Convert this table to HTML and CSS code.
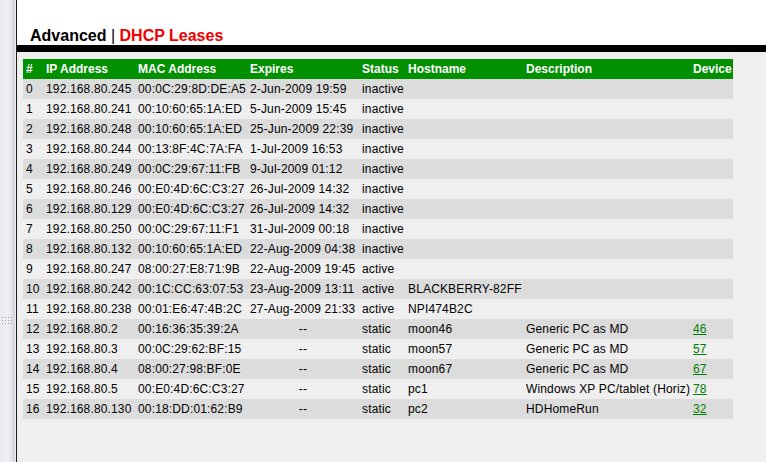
FILE: index.html
```html
<!DOCTYPE html>
<html lang="en">
<head>
  <meta charset="UTF-8" />
  <title>Advanced | DHCP Leases</title>
  <link rel="stylesheet" href="styles.css">
</head>
<body>

<div class="frame">
  <div class="side">
    <svg class="grip" width="10" height="7" viewBox="0 0 10 7">
      <g fill="#9a9fa8">
        <rect x="0" y="0" width="1" height="1"/><rect x="3" y="0" width="1" height="1"/><rect x="6" y="0" width="1" height="1"/><rect x="9" y="0" width="1" height="1"/>
        <rect x="0" y="3" width="1" height="1"/><rect x="3" y="3" width="1" height="1"/><rect x="6" y="3" width="1" height="1"/><rect x="9" y="3" width="1" height="1"/>
        <rect x="0" y="6" width="1" height="1"/><rect x="3" y="6" width="1" height="1"/><rect x="6" y="6" width="1" height="1"/><rect x="9" y="6" width="1" height="1"/>
      </g>
    </svg>
  </div>

  <div class="main">
    <div class="top">
      <h1>Advanced <span class="sep">|</span> <span class="page">DHCP Leases</span></h1>
    </div>
    <div class="bar"></div>

    <div class="content">
      <table class="leases">
        <colgroup>
          <col style="width:20px"><col style="width:92px"><col style="width:112px"><col style="width:112px">
          <col style="width:46px"><col style="width:118px"><col style="width:167px"><col style="width:43px">
        </colgroup>
        <thead>
          <tr>
            <th>#</th><th>IP Address</th><th>MAC Address</th><th>Expires</th>
            <th>Status</th><th>Hostname</th><th>Description</th><th>Device</th>
          </tr>
        </thead>
        <tbody>
          <tr><td>0</td><td>192.168.80.245</td><td>00:0C:29:8D:DE:A5</td><td>2-Jun-2009 19:59</td><td>inactive</td><td></td><td></td><td></td></tr>
          <tr><td>1</td><td>192.168.80.241</td><td>00:10:60:65:1A:ED</td><td>5-Jun-2009 15:45</td><td>inactive</td><td></td><td></td><td></td></tr>
          <tr><td>2</td><td>192.168.80.248</td><td>00:10:60:65:1A:ED</td><td>25-Jun-2009 22:39</td><td>inactive</td><td></td><td></td><td></td></tr>
          <tr><td>3</td><td>192.168.80.244</td><td>00:13:8F:4C:7A:FA</td><td>1-Jul-2009 16:53</td><td>inactive</td><td></td><td></td><td></td></tr>
          <tr><td>4</td><td>192.168.80.249</td><td>00:0C:29:67:11:FB</td><td>9-Jul-2009 01:12</td><td>inactive</td><td></td><td></td><td></td></tr>
          <tr><td>5</td><td>192.168.80.246</td><td>00:E0:4D:6C:C3:27</td><td>26-Jul-2009 14:32</td><td>inactive</td><td></td><td></td><td></td></tr>
          <tr><td>6</td><td>192.168.80.129</td><td>00:E0:4D:6C:C3:27</td><td>26-Jul-2009 14:32</td><td>inactive</td><td></td><td></td><td></td></tr>
          <tr><td>7</td><td>192.168.80.250</td><td>00:0C:29:67:11:F1</td><td>31-Jul-2009 00:18</td><td>inactive</td><td></td><td></td><td></td></tr>
          <tr><td>8</td><td>192.168.80.132</td><td>00:10:60:65:1A:ED</td><td>22-Aug-2009 04:38</td><td>inactive</td><td></td><td></td><td></td></tr>
          <tr><td>9</td><td>192.168.80.247</td><td>08:00:27:E8:71:9B</td><td>22-Aug-2009 19:45</td><td>active</td><td></td><td></td><td></td></tr>
          <tr><td>10</td><td>192.168.80.242</td><td>00:1C:CC:63:07:53</td><td>23-Aug-2009 13:11</td><td>active</td><td>BLACKBERRY-82FF</td><td></td><td></td></tr>
          <tr><td>11</td><td>192.168.80.238</td><td>00:01:E6:47:4B:2C</td><td>27-Aug-2009 21:33</td><td>active</td><td>NPI474B2C</td><td></td><td></td></tr>
          <tr><td>12</td><td>192.168.80.2</td><td>00:16:36:35:39:2A</td><td class="none">--</td><td>static</td><td>moon46</td><td>Generic PC as MD</td><td><a href="#">46</a></td></tr>
          <tr><td>13</td><td>192.168.80.3</td><td>00:0C:29:62:BF:15</td><td class="none">--</td><td>static</td><td>moon57</td><td>Generic PC as MD</td><td><a href="#">57</a></td></tr>
          <tr><td>14</td><td>192.168.80.4</td><td>08:00:27:98:BF:0E</td><td class="none">--</td><td>static</td><td>moon67</td><td>Generic PC as MD</td><td><a href="#">67</a></td></tr>
          <tr><td>15</td><td>192.168.80.5</td><td>00:E0:4D:6C:C3:27</td><td class="none">--</td><td>static</td><td>pc1</td><td>Windows XP PC/tablet (Horiz)</td><td><a href="#">78</a></td></tr>
          <tr><td>16</td><td>192.168.80.130</td><td>00:18:DD:01:62:B9</td><td class="none">--</td><td>static</td><td>pc2</td><td>HDHomeRun</td><td><a href="#">32</a></td></tr>
        </tbody>
      </table>
    </div>
  </div>
</div>

</body>
</html>
```

FILE: styles.css
```css
html, body {
  margin: 0;
  height: 100%;
}
body {
  font-family: "Liberation Sans", Arial, sans-serif;
  background: #efefef;
  color: #000;
  overflow: hidden;
}
.frame {
  display: flex;
  height: 462px;
}
.side {
  width: 17px;
  flex: none;
  background: linear-gradient(to right, #e9eaed, #eff0f2 50%, #dfe1e5 78%, #cdd0d6 88%, #f6f6f7);
  border-right: 1px solid #1a1a1a;
  display: flex;
  justify-content: center;
  padding-top: 317px;
  box-sizing: border-box;
  align-items: flex-start;
}
.grip {
  display: block;
  margin-right: 3px;
}
.main {
  flex: 1;
  display: flex;
  flex-direction: column;
}
.top {
  background: #fff;
  height: 45px;
  box-sizing: border-box;
  padding: 27px 0 0 13px;
}
h1 {
  margin: 0;
  font-size: 16px;
  line-height: 18px;
  font-weight: bold;
}
.sep {
  font-weight: normal;
}
.page {
  color: #f00000;
}
.bar {
  height: 7px;
  background: #000;
}
.content {
  padding: 7px 0 0 6px;
}
.leases {
  border-collapse: collapse;
  table-layout: fixed;
  width: 710px;
  font-size: 12px;
  letter-spacing: 0.15px;
}
.leases th, .leases td {
  padding: 0 0 0 3px;
  height: 20px;
  line-height: 20px;
  text-align: left;
  white-space: nowrap;
  overflow: visible;
}
.leases th {
  background: #009000;
  color: #fff;
  font-weight: bold;
  letter-spacing: 0;
}
.leases tbody tr:nth-child(odd) {
  background: #dcdcdc;
}
.leases td.none {
  text-align: center;
  padding: 0;
}
.leases a {
  color: #008000;
}
```
